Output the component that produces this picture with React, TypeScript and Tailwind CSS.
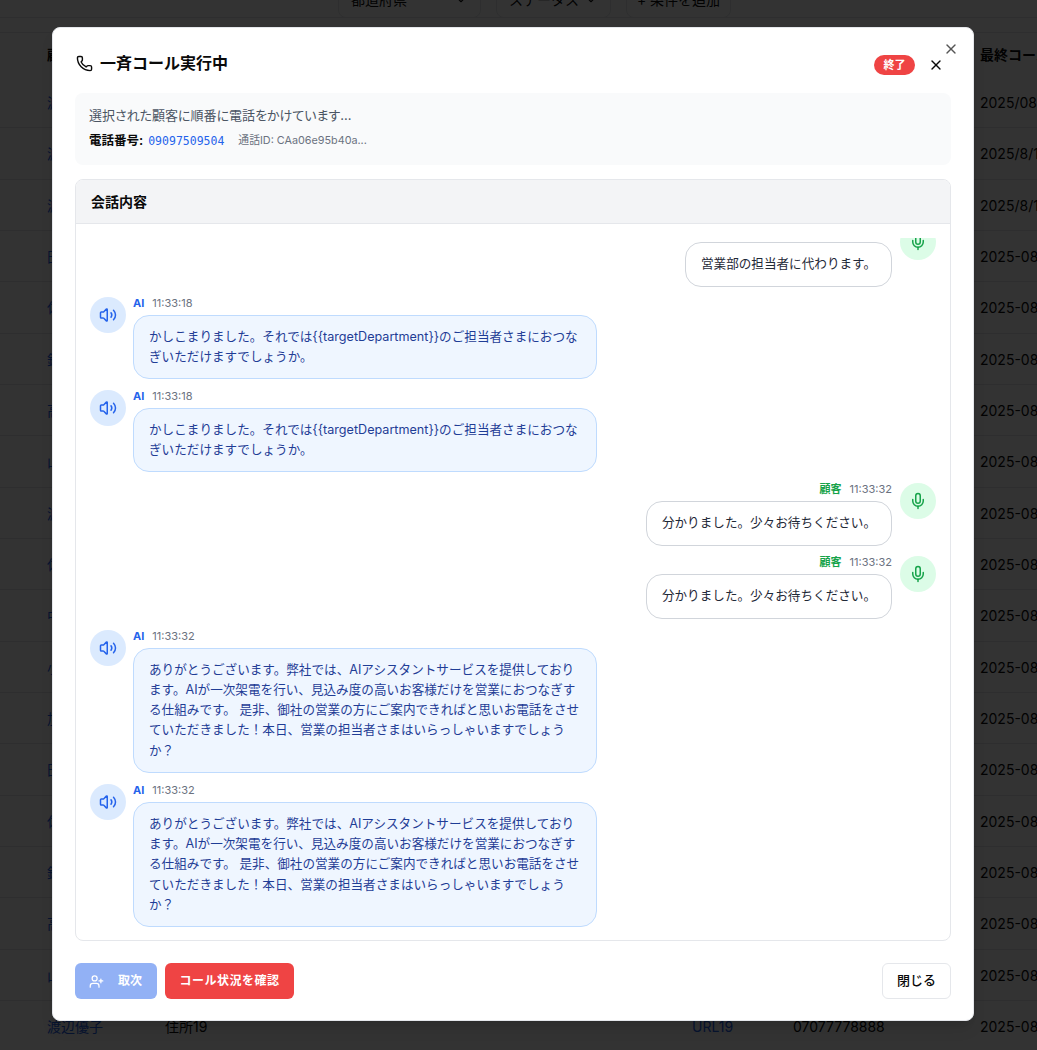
import React from "react";
import { Phone, X, Mic, Volume2, UserPlus, ChevronDown } from "lucide-react";

const names = ["渡辺優子","渡辺健一","渡部真理","田中太郎","佐藤花子","鈴木一郎","高橋美咲","山田次郎","渡辺優子","佐藤健太","中村明美","小林直樹","加藤由美","田中太郎","佐藤花子","鈴木一郎","高橋美咲","山田次郎","渡辺優子"];
const dates = (i: number) => (i === 0 ? "2025/08/15" : i < 3 ? "2025/8/15" : "2025-08-15");

function Background() {
  return (
    <div className="h-[1050px] overflow-hidden text-sm text-[#0a0a0a]">
      <div className="h-[33px] border-b border-[#e5e7eb]">
        <div className="h-[18px] border-b border-[#e5e7eb]">
          <div className="flex gap-[15px] pl-[338px] -translate-y-[18px]">
            <div className="flex h-9 w-[143px] items-center justify-between rounded-lg border border-[#e5e7eb] px-3"><span>都道府県</span><ChevronDown size={14} /></div>
            <div className="flex h-9 w-[115px] items-center justify-between rounded-lg border border-[#e5e7eb] px-3"><span>ステータス</span><ChevronDown size={14} /></div>
            <div className="flex h-9 w-[105px] items-center justify-center rounded-lg border border-[#e5e7eb]"><span>+ 条件を追加</span></div>
          </div>
        </div>
      </div>
      <div className="flex h-11 items-center font-bold whitespace-nowrap">
        <div className="w-[165px] shrink-0 pl-[47px]">顧客名</div>
        <div className="w-[815px] shrink-0">住所</div>
        <div className="shrink-0">最終コール</div>
      </div>
      {names.map((n, i) => (
        <div key={i} className="flex h-[51.33px] items-center border-b border-[#e5e7eb] pt-[2px] whitespace-nowrap">
          <div className="w-[165px] shrink-0 pl-[47px] text-[#2563eb]">{n}</div>
          <div className="w-[527px] shrink-0">住所{i + 1}</div>
          <div className="w-[101px] shrink-0 text-[#2563eb]">URL{i + 1}</div>
          <div className="w-[187px] shrink-0">07077778888</div>
          <div className="shrink-0">{dates(i)}</div>
        </div>
      ))}
    </div>
  );
}

function Avatar({ ai }: { ai: boolean }) {
  return (
    <div className={`flex h-9 w-9 shrink-0 items-center justify-center rounded-full ${ai ? "bg-[#dbeafe] text-[#2563eb]" : "bg-[#dcfce7] text-[#16a34a]"}`}>
      {ai ? <Volume2 size={18} /> : <Mic size={18} />}
    </div>
  );
}

function AiMsg({ time, lines }: { time: string; lines: string[] }) {
  return (
    <div className="flex gap-[7px]">
      <Avatar ai />
      <div className="w-[464px]">
        <div className="flex h-[18px] items-start gap-2 text-[11px] leading-[13px]">
          <span className="font-bold text-[#2563eb]">AI</span>
          <span className="text-[#6b7280]">{time}</span>
        </div>
        <div className="rounded-2xl border border-[#bfdbfe] bg-[#eff6ff] px-[15px] py-[11px] text-[12.6px] leading-[20.25px] whitespace-nowrap text-[#1f3d96]">
          {lines.map((l, i) => (
            <div key={i}>{l}</div>
          ))}
        </div>
      </div>
    </div>
  );
}

function CustomerMsg({ time, text, hideLabel, first }: { time: string; text: string; hideLabel?: boolean; first?: boolean }) {
  return (
    <div className={`flex justify-end gap-2 ${first ? "-mb-px" : ""}`}>
      <div className="flex flex-col items-end">
        <div className="flex h-[18px] items-start gap-2 text-[11px] leading-[13px]">
          {!hideLabel && <span className="font-bold text-[#16a34a]">顧客</span>}
          {!hideLabel && <span className="text-[#6b7280]">{time}</span>}
        </div>
        <div className="rounded-2xl border border-[#d1d5db] bg-white px-[15px] py-[11px] text-[12.6px] leading-[20.25px] whitespace-nowrap text-[#1f2937]">
          {text}
        </div>
      </div>
      <Avatar ai={false} />
    </div>
  );
}

const ka = ["かしこまりました。それでは{{targetDepartment}}のご担当者さまにおつな", "ぎいただけますでしょうか。"];
const ari = [
  "ありがとうございます。弊社では、AIアシスタントサービスを提供しており",
  "ます。AIが一次架電を行い、見込み度の高いお客様だけを営業におつなぎす",
  "る仕組みです。 是非、御社の営業の方にご案内できればと思いお電話をさせ",
  "ていただきました！本日、営業の担当者さまはいらっしゃいますでしょう",
  "か？",
];

export default function App() {
  return (
    <div className="relative h-[1050px] w-[1037px] overflow-hidden bg-white font-['Inter','Noto_Sans_CJK_JP',sans-serif]">
      <Background />
      <div className="absolute inset-0 bg-black/80" />
      <div className="absolute top-[27px] left-[52px] flex h-[994px] w-[922px] flex-col rounded-lg border border-[#e5e7eb] bg-white px-[22px] shadow-lg">
        <button className="absolute top-[13px] right-[14px] text-[#555]"><X size={16} /></button>
        <div className="flex h-[65px] shrink-0 items-end justify-between pb-[18px]">
          <div className="flex items-center gap-[7px] pl-[1px]">
            <Phone size={17} className="text-[#0a0a0a]" />
            <h2 className="text-base leading-6 font-semibold text-[#0a0a0a]">一斉コール実行中</h2>
          </div>
          <div className="flex items-center gap-[13px] pr-[7px]">
            <span className="flex h-5 w-[41px] items-center justify-center rounded-full bg-[#ef4444] text-[11px] font-bold text-white">終了</span>
            <X size={16} className="text-[#0a0a0a]" />
          </div>
        </div>
        <div className="flex h-[72px] shrink-0 flex-col rounded-lg bg-[#f9fafb] px-[14px] pt-[12px]">
          <p className="text-[13px] leading-5 text-[#4b5563] [font-feature-settings:'palt']">選択された顧客に順番に電話をかけています...</p>
          <div className="mt-[6px] flex items-center text-xs leading-5">
            <span className="text-[12.5px] font-bold text-[#0a0a0a]">電話番号:</span>
            <span className="ml-[5px] font-['DejaVu_Sans_Mono',monospace] text-[11.5px] text-[#2563eb]">09097509504</span>
            <span className="ml-[14px] text-[10.8px] text-[#6b7280]">通話ID: CAa06e95b40a...</span>
          </div>
        </div>
        <div className="mt-[14px] flex h-[762px] shrink-0 flex-col overflow-hidden rounded-lg border border-[#e5e7eb]">
          <div className="flex h-[44px] shrink-0 items-center border-b border-[#e5e7eb] bg-[#f3f4f6] px-[15px] text-sm font-semibold text-[#0a0a0a]">会話内容</div>
          <div className="flex-1 overflow-hidden px-[14px] pt-[14px] pb-[13px]">
            <div className="flex h-full flex-col justify-end gap-[10.9px] overflow-hidden">
              <CustomerMsg time="11:33:10" text="営業部の担当者に代わります。" hideLabel first />
              <AiMsg time="11:33:18" lines={ka} />
              <AiMsg time="11:33:18" lines={ka} />
              <CustomerMsg time="11:33:32" text="分かりました。少々お待ちください。" />
              <CustomerMsg time="11:33:32" text="分かりました。少々お待ちください。" />
              <AiMsg time="11:33:32" lines={ari} />
              <AiMsg time="11:33:32" lines={ari} />
            </div>
          </div>
        </div>
        <div className="mt-[22px] flex items-center justify-between">
          <div className="flex gap-2">
            <button className="flex h-9 w-[82px] items-center gap-[14px] rounded-md bg-[#2563eb]/50 pl-[14px] text-xs font-bold text-white">
              <UserPlus size={15} />
              <span>取次</span>
            </button>
            <button className="flex h-9 w-[129px] items-center justify-center rounded-md bg-[#ef4444] text-xs font-bold tracking-[0.5px] text-white">コール状況を確認</button>
          </div>
          <button className="flex h-9 w-[69px] items-center justify-center rounded-md border border-[#e5e7eb] bg-white text-[13px] font-medium text-[#0a0a0a]">閉じる</button>
        </div>
      </div>
    </div>
  );
}
